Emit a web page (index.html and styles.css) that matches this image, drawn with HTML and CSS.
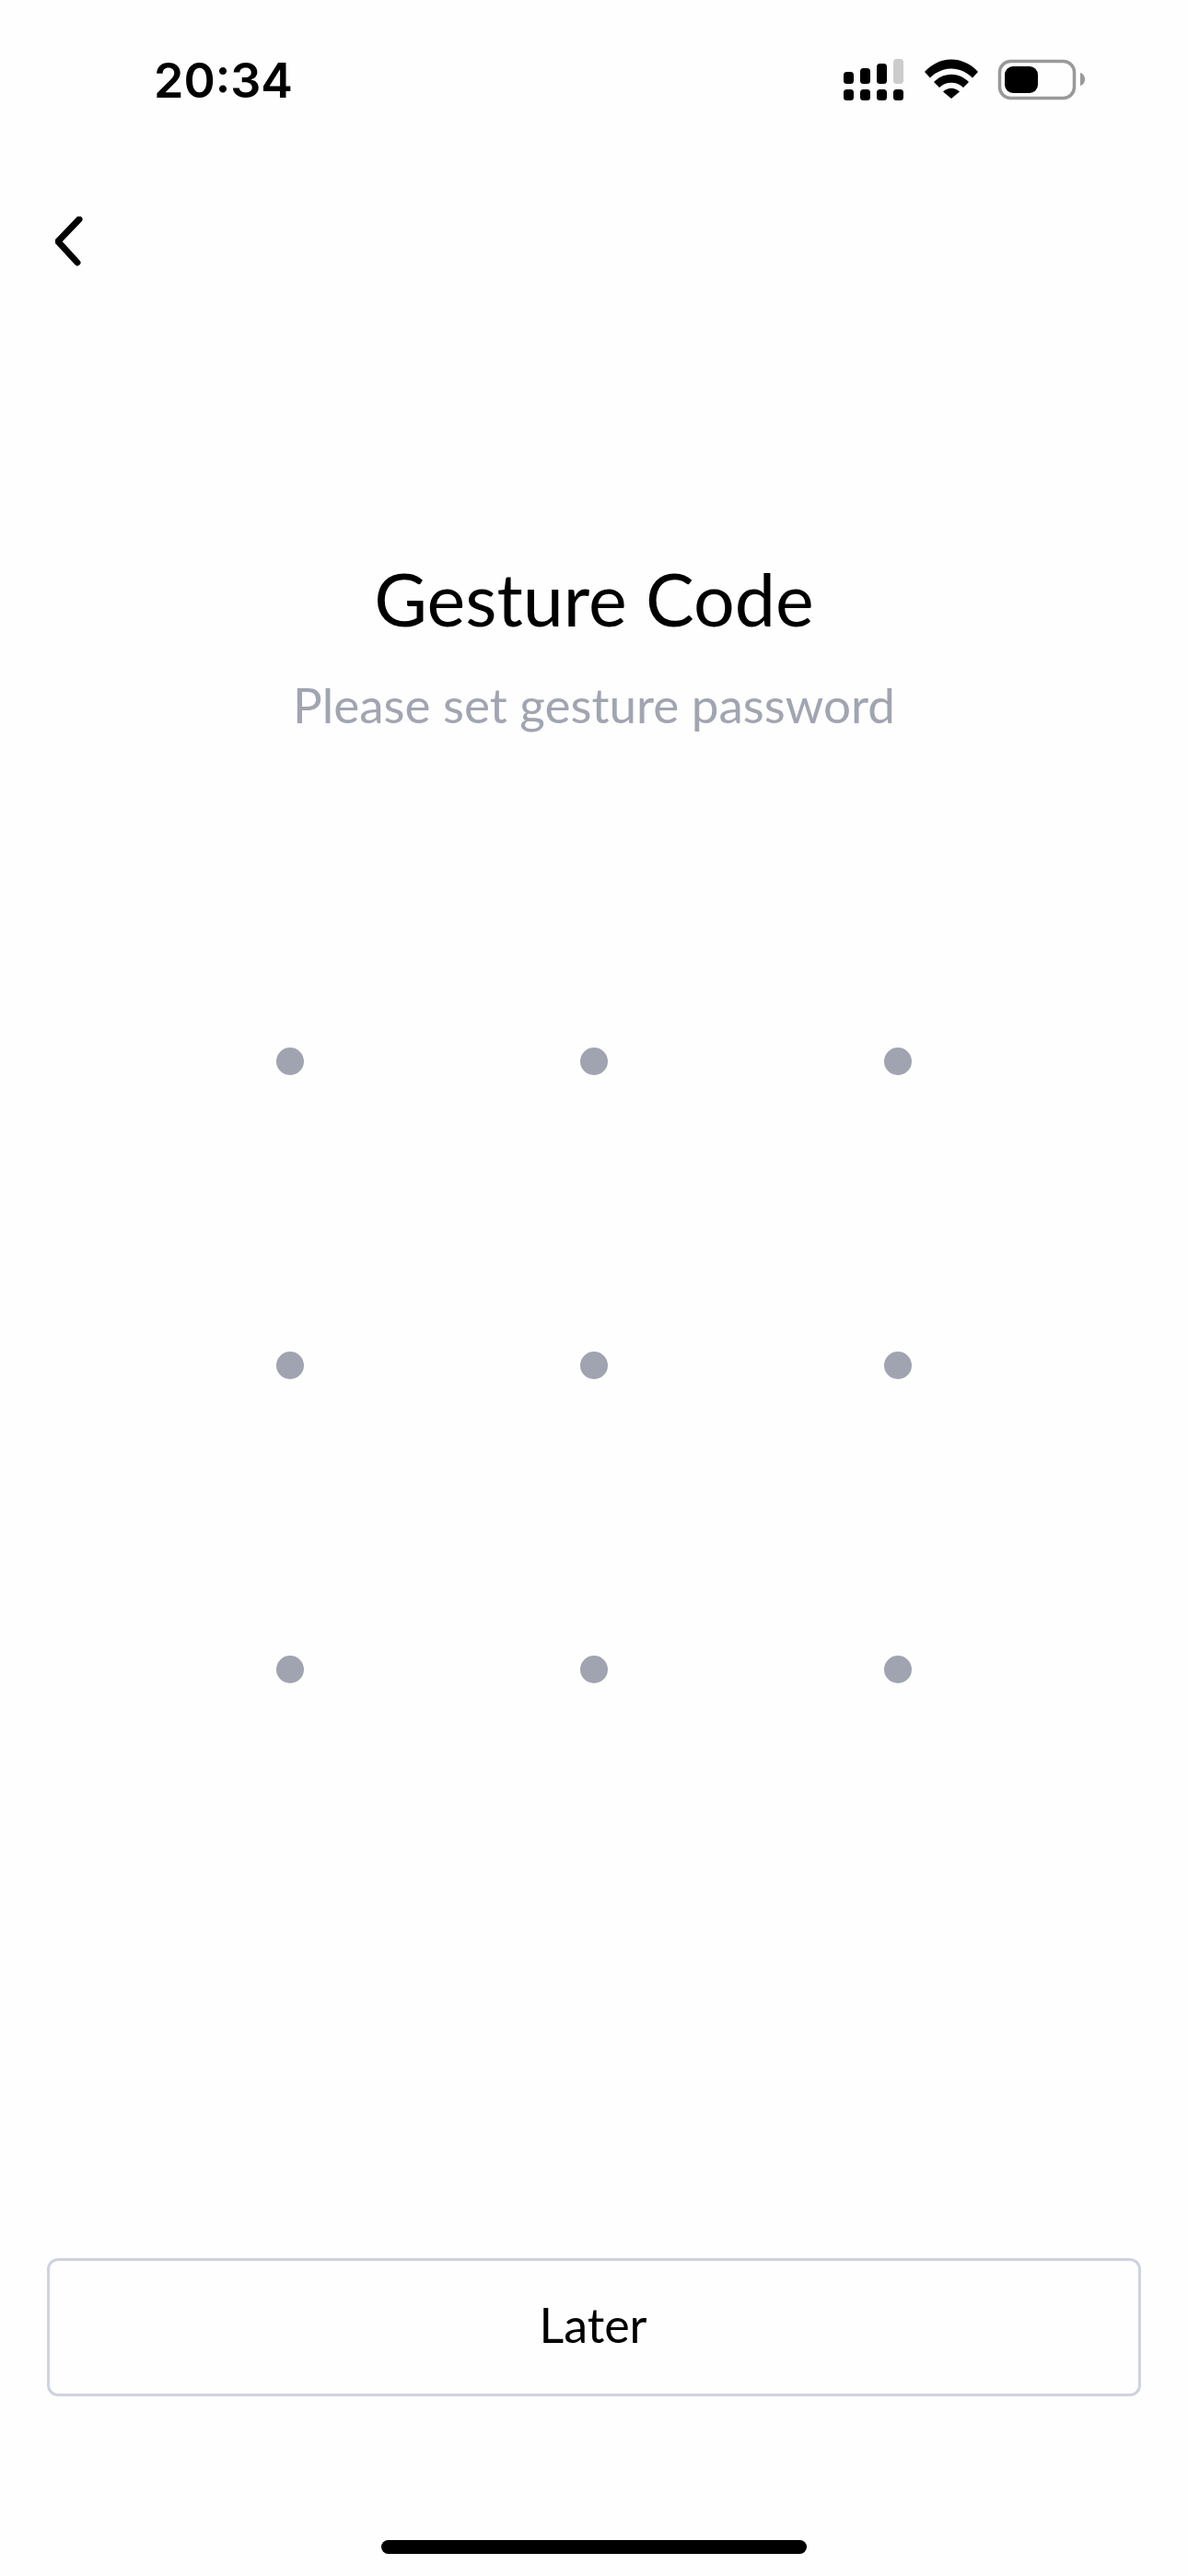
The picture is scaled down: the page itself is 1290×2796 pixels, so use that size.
FILE: index.html
```html
<!DOCTYPE html>
<html lang="en">
<head>
    <meta charset="UTF-8">
    <meta name="viewport" content="width=device-width, initial-scale=1.0">
    <title>Gesture Code</title>
    <link rel="stylesheet" href="styles.css">
</head>
<body>

<div class="page">
    <div class="status-bar">
        <div class="time">20:34</div>
        <svg class="status-icons" width="262" height="45" viewBox="916 64 262 45">
            <!-- signal -->
            <g fill="#000">
                <rect x="916" y="78" width="11" height="13" rx="3.5"/>
                <rect x="934" y="74" width="11" height="17" rx="3.5"/>
                <rect x="952" y="69" width="11" height="22" rx="3.5"/>
                <rect x="916" y="97" width="11" height="12" rx="3.5"/>
                <rect x="934" y="97" width="11" height="12" rx="3.5"/>
                <rect x="952" y="97" width="11" height="12" rx="3.5"/>
                <rect x="970" y="97" width="11" height="12" rx="3.5"/>
            </g>
            <rect x="970" y="64" width="11" height="27" rx="3.5" fill="#ccc"/>
            <!-- wifi -->
            <g fill="#000">
                <path d="M1004 78 C1020 60 1046 60 1062 78 L1056 84.500 C1043 71 1023 71 1010 84.500 Z"/>
                <path d="M1014 89 C1025 78 1041 78 1052 89 L1046 95 C1039 88 1027 88 1020 95 Z"/>
                <path d="M1024 99.500 C1030 94.500 1036 94.500 1042 99.500 L1033 107 Z"/>
            </g>
            <!-- battery -->
            <rect x="1085.500" y="66.500" width="81" height="40" rx="12" fill="none" stroke="#999" stroke-width="3.500"/>
            <rect x="1091" y="72" width="36" height="29" rx="9" fill="#000"/>
            <path d="M1173 79 C1176.500 80 1178 83 1178 86 C1178 89 1176.500 92 1173 93 Z" fill="#999"/>
        </svg>
    </div>

    <div class="nav">
        <svg class="back" width="32" height="56" viewBox="0 0 32 56">
            <path d="M26 3 L3 27 L24 50" fill="none" stroke="#000" stroke-width="7" stroke-linecap="round" stroke-linejoin="miter"/>
        </svg>
    </div>

    <div class="heading">
        <h1>Gesture Code</h1>
        <p>Please set gesture password</p>
    </div>

    <div class="pattern">
        <div class="dot"></div>
        <div class="dot"></div>
        <div class="dot"></div>
        <div class="dot"></div>
        <div class="dot"></div>
        <div class="dot"></div>
        <div class="dot"></div>
        <div class="dot"></div>
        <div class="dot"></div>
    </div>

    <button class="later">Later</button>

    <div class="home-bar"></div>
</div>

</body>
</html>
```

FILE: styles.css
```css
body {
    margin: 0;
    background-color: #fefefe;
    font-family: "Lato", "Noto Sans", sans-serif;
    color: #000;
}

.page {
    width: 1290px;
    height: 2796px;
    display: flex;
    flex-direction: column;
    overflow: hidden;
}

.status-bar {
    display: flex;
    justify-content: space-between;
    align-items: center;
    height: 45px;
    padding: 64px 112px 0 167px;
}

.time {
    font-family: "Inter", sans-serif;
    font-size: 52px;
    font-weight: 600;
    line-height: 45px;
    padding-top: 2px;
}

.status-icons {
    display: block;
}

.nav {
    padding: 126px 0 0 60px;
    height: 56px;
}

.back {
    display: block;
}

.heading {
    margin-top: 314px;
    text-align: center;
}

h1 {
    margin: 0;
    font-size: 79px;
    font-weight: 400;
    line-height: 90px;
}

p {
    margin: 40px 0 0;
    font-size: 53px;
    font-weight: 400;
    line-height: 60px;
    color: #a1a5b1;
}

.pattern {
    display: grid;
    grid-template-columns: repeat(3, 30px);
    gap: 300px;
    justify-content: center;
    margin-top: 342px;
}

.dot {
    width: 30px;
    height: 30px;
    border-radius: 50%;
    background-color: #a0a4b0;
}

.later {
    width: 1188px;
    height: 150px;
    margin: 624px 0 0 51px;
    padding: 0 2px 7px 0;
    background: transparent;
    border: 3px solid #cfd3e0;
    border-radius: 12px;
    font-family: inherit;
    font-size: 52px;
    color: #000;
}

.home-bar {
    width: 462px;
    height: 15px;
    margin: 156px auto 0;
    border-radius: 8px;
    background-color: #000;
}
```
